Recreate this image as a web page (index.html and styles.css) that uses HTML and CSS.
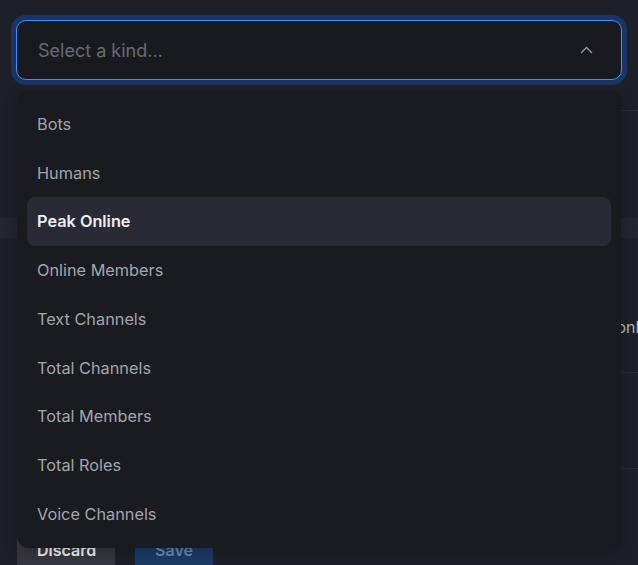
FILE: index.html
```html
<!DOCTYPE html>
<html lang="en">
<head>
<meta charset="UTF-8">
<meta name="viewport" content="width=device-width, initial-scale=1.0">
<title>Counter channel</title>
<link rel="stylesheet" href="styles.css">
</head>
<body>
<div class="page">
    <div class="select-field">
        <span class="placeholder">Select a kind...</span>
        <svg class="chevron" width="13" height="8" viewBox="0 0 13 8">
            <path d="M1 7 L6.5 1.5 L12 7" fill="none" stroke="#9a9ca3" stroke-width="1.3"/>
        </svg>
    </div>

    <div class="settings">
        <div class="divider first"></div>
        <div class="section-band"></div>
        <p class="option-text">Count only members who are online</p>
        <div class="divider second"></div>
        <div class="divider third"></div>
        <div class="actions">
            <button class="btn discard">Discard</button>
            <button class="btn save">Save</button>
        </div>
    </div>

    <ul class="menu">
        <li class="menu-item">Bots</li>
        <li class="menu-item">Humans</li>
        <li class="menu-item active">Peak Online</li>
        <li class="menu-item">Online Members</li>
        <li class="menu-item">Text Channels</li>
        <li class="menu-item">Total Channels</li>
        <li class="menu-item">Total Members</li>
        <li class="menu-item">Total Roles</li>
        <li class="menu-item">Voice Channels</li>
    </ul>
</div>
</body>
</html>
```

FILE: styles.css
```css
body {
    margin: 0;
    background-color: #1e2029;
    font-family: Inter, "Noto Sans", sans-serif;
    overflow: hidden;
}
.page {
    position: relative;
    padding-top: 20px;
    height: 545px;
}
.select-field {
    display: flex;
    align-items: center;
    justify-content: space-between;
    height: 60px;
    margin: 0 16px 0 16px;
    padding: 0 28px 0 21px;
    box-sizing: border-box;
    background-color: #191a1f;
    border: 1px solid #3d8ef5;
    border-radius: 10px;
    box-shadow: 0 0 0 5px #1a3565;
}
.placeholder {
    font-size: 18px;
    color: #676a72;
}
.chevron {
    display: block;
}
.divider {
    margin-left: 17px;
    border-top: 1px solid #2a2d35;
}
.divider.first {
    margin-top: 30px;
}
.section-band {
    height: 20px;
    margin-top: 107px;
    background-color: #24262f;
}
.option-text {
    width: 662px;
    margin: 79px 0 0 0;
    text-align: right;
    font-size: 16px;
    line-height: 20px;
    color: #b1b3b9;
    white-space: nowrap;
}
.divider.second {
    margin-top: 35px;
}
.divider.third {
    margin-top: 95px;
}
.actions {
    display: flex;
    gap: 20px;
    margin: 61px 0 0 17px;
}
.btn {
    height: 40px;
    padding: 0 20px;
    border: none;
    border-radius: 4px;
    font-family: Inter, "Noto Sans", sans-serif;
    font-size: 16px;
    font-weight: 600;
}
.btn.discard {
    width: 98px;
    background-color: #35373e;
    color: #f2f3f5;
}
.btn.save {
    width: 78px;
    background-color: #1b3a66;
    color: #6b88b2;
}
.menu {
    position: absolute;
    top: 90px;
    left: 17px;
    width: 604px;
    box-sizing: border-box;
    margin: 0;
    padding: 9.5px 10px;
    list-style: none;
    background-color: #1a1b20;
    border-radius: 12px;
    box-shadow: 0 4px 14px rgba(0, 0, 0, 0.25);
}
.menu-item {
    height: 48.75px;
    padding: 0 10px;
    display: flex;
    align-items: center;
    font-size: 16.3px;
    color: #a3a5ab;
    border-radius: 8px;
}
.menu-item.active {
    background-color: #282a35;
    color: #eeeff2;
    font-weight: 600;
}
```
